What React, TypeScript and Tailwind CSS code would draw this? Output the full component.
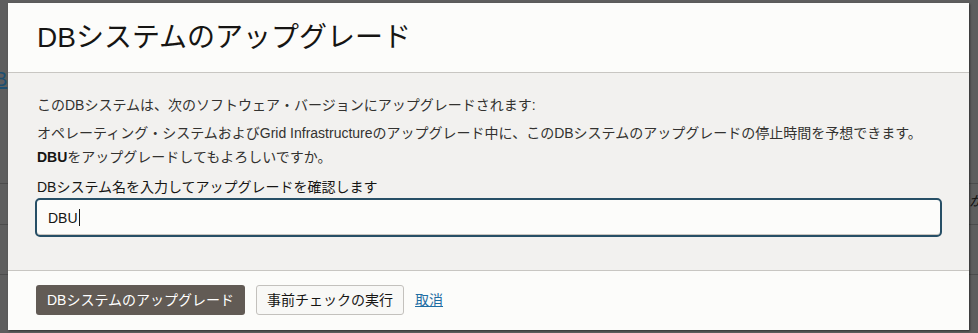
import React from "react";

const font = { fontFamily: '"Liberation Sans", "Noto Sans CJK JP", sans-serif' };

const UpgradeDialog = () => {
  return (
    <div className="relative z-10 ml-[8px] mt-[3px] flex w-[961px] flex-col bg-[#fcfcfa] shadow-[1px_1px_2px_rgba(0,0,0,0.5)]">
      {/* Header */}
      <div className="flex h-[70px] items-center border-b border-[#c8c6c2] pl-[29px]">
        <h1 className="text-[28px] leading-[36px] text-[#161513]">DBシステムのアップグレード</h1>
      </div>

      {/* Body */}
      <div className="flex flex-col bg-[#f2f1ef] px-[27px] pt-[22px] pb-[33px] text-[14px] text-[#333230]">
        <p className="ml-[2px] leading-[20px]">
          このDBシステムは、次のソフトウェア・バージョンにアップグレードされます:
        </p>
        <p className="ml-[2px] mt-[6px] leading-[24px]">
          オペレーティング・システムおよびGrid Infrastructureのアップグレード中に、このDBシステムのアップグレードの停止時間を予想できます。
          <br />
          <b className="text-[#161513]">DBU</b>をアップグレードしてもよろしいですか。
        </p>
        <label className="ml-[2px] mt-[8px] leading-[20px] text-[#161513]">
          DBシステム名を入力してアップグレードを確認します
        </label>
        <div className="mt-[1px] flex h-[39px] items-center rounded-[5px] border-2 border-[#274f66] bg-[#fcfcfa] pl-[11px] shadow-[inset_0_-1px_0_#c9c5bf] text-[#161513]">
          <span className="leading-[20px]">DBU</span>
          <span className="ml-[1px] h-[17px] w-px bg-[#161513]" />
        </div>
      </div>

      {/* Footer */}
      <div className="flex items-center gap-[11px] border-t border-[#c8c6c2] pl-[28px] pt-[14px] pb-[15px] text-[14px]">
        <button className="h-[30px] rounded-[3px] bg-[#625b55] px-[11px] text-white">
          DBシステムのアップグレード
        </button>
        <button className="h-[30px] rounded-[3px] border border-[#c3c1bd] bg-[#f8f8f6] px-[10px] text-[#161513]">
          事前チェックの実行
        </button>
        <a className="text-[#1f6ea3] underline">取消</a>
      </div>
    </div>
  );
};

export default function App() {
  return (
    <div className="relative h-[333px] w-[978px] overflow-hidden bg-[#5e5e5e]" style={font}>
      {/* page under the overlay */}
      <span className="absolute left-[-6px] top-[64px] text-[20px] text-[#1d4f70] underline">B</span>
      <div className="absolute left-0 top-[183px] h-px w-[978px] bg-[#4c4c4c]" />
      <div className="absolute left-0 top-[224px] h-px w-[978px] bg-[#4c4c4c]" />
      <div className="absolute left-0 top-[274px] h-px w-[978px] bg-[#4c4c4c]" />
      <span className="absolute left-[969px] top-[191px] text-[14px] italic text-[#111]">が</span>
      <UpgradeDialog />
    </div>
  );
}
